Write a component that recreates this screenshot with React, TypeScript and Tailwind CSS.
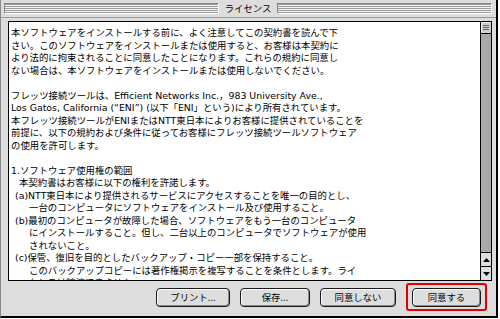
import React from "react";

const lines: { t: string; pl: number }[] = [
  { t: "本ソフトウェアをインストールする前に、よく注意してこの契約書を読んで下", pl: 0 },
  { t: "さい。このソフトウェアをインストールまたは使用すると、お客様は本契約に", pl: 0 },
  { t: "より法的に拘束されることに同意したことになります。これらの規約に同意し", pl: 0 },
  { t: "ない場合は、本ソフトウェアをインストールまたは使用しないでください。", pl: 0 },
  { t: "", pl: 0 },
  { t: "フレッツ接続ツールは、Efficient Networks Inc.，983 University Ave.,", pl: 0 },
  { t: "Los Gatos, California (\u201CENI\u201D) (以下「ENI」という)により所有されています。", pl: 0 },
  { t: "本フレッツ接続ツールがENIまたはNTT東日本によりお客様に提供されていることを", pl: 0 },
  { t: "前提に、以下の規約および条件に従ってお客様にフレッツ接続ツールソフトウェア", pl: 0 },
  { t: "の使用を許可します。", pl: 0 },
  { t: "", pl: 0 },
  { t: "1.ソフトウェア使用権の範囲", pl: 0 },
  { t: "本契約書はお客様に以下の権利を許諾します。", pl: 8 },
  { t: "(a)NTT東日本により提供されるサービスにアクセスすることを唯一の目的とし、", pl: 4 },
  { t: "一台のコンピュータにソフトウェアをインストール及び使用すること。", pl: 18 },
  { t: "(b)最初のコンピュータが故障した場合、ソフトウェアをもう一台のコンピュータ", pl: 4 },
  { t: "にインストールすること。但し、二台以上のコンピュータでソフトウェアが使用", pl: 18 },
  { t: "されないこと。", pl: 18 },
  { t: "(c)保管、復旧を目的としたバックアップ・コピー一部を保持すること。", pl: 4 },
  { t: "このバックアップコピーには著作権掲示を複写することを条件とします。ライ", pl: 18 },
  { t: "センスは譲渡できません。", pl: 18 },
];

const font = {
  fontFamily: '"Noto Sans CJK JP", "Liberation Sans", sans-serif',
};

const bodyFont = {
  fontFamily: '"DejaVu Sans", "Noto Sans CJK JP", sans-serif',
};

function Stripes() {
  return (
    <div className="flex-1 h-[11px] border-t border-l border-t-[#888] border-l-[#888] border-b border-r border-b-white border-r-white bg-[repeating-linear-gradient(to_bottom,#9a9a9a_0px,#9a9a9a_1px,#f4f4f4_1px,#f4f4f4_2px)]" />
  );
}

function Btn({ label, w }: { label: string; w: number }) {
  return (
    <div
      className="h-[19px] rounded-[4px] border border-[#1a1a1a] bg-[#dedede] flex items-center justify-center text-[9.4px] text-black shadow-[inset_1px_1px_0_#ffffff,inset_-1px_-1px_0_#8a8a8a]"
      style={{ width: w }}
    >
      {label}
    </div>
  );
}

export default function App() {
  return (
    <div className="w-[500px] h-[319px] bg-white" style={font}>
      <div className="w-[498px] h-[318px] flex flex-col bg-[#dddddd] border-l border-l-[#8a8a8a] border-r-2 border-r-black border-b-2 border-b-black">
        <div className="h-[18px] flex items-center gap-[6px] pl-[3px] pr-[4px] border-b border-b-[#999]">
          <Stripes />
          <div className="text-[9.4px] leading-none text-black">ライセンス</div>
          <Stripes />
        </div>
        <div className="flex-1 flex flex-col pl-[7px] pr-[4px] pt-[3px]">
          <div className="h-[260px] border border-black flex bg-white">
            <div
              className="flex-1 overflow-hidden pl-[2px] pt-[5px] text-[9.4px] leading-[12.5px] text-black whitespace-pre"
              style={bodyFont}
            >
              {lines.map((l, i) => (
                <div key={i} className="h-[12.5px]" style={{ paddingLeft: l.pl }}>
                  {l.t}
                </div>
              ))}
            </div>
            <div className="w-[11px] border-l border-black flex flex-col bg-[#a9a9a9]">
              <div className="h-[12px] bg-[#cfcfcf] border-b border-black flex flex-col items-center justify-center gap-[1px] shadow-[inset_1px_1px_0_#eee]">
                <div className="w-[6px] h-[1px] bg-[#666]" />
                <div className="w-[6px] h-[1px] bg-[#666]" />
                <div className="w-[6px] h-[1px] bg-[#666]" />
              </div>
              <div className="flex-1" />
              <div className="h-[14px] border-t border-black bg-[#dedede] flex items-center justify-center">
                <svg width="7" height="4" viewBox="0 0 7 4">
                  <polygon points="3.5,0 7,4 0,4" fill="#000" />
                </svg>
              </div>
              <div className="h-[14px] border-t border-black bg-[#dedede] flex items-center justify-center">
                <svg width="7" height="4" viewBox="0 0 7 4">
                  <polygon points="0,0 7,0 3.5,4" fill="#000" />
                </svg>
              </div>
            </div>
          </div>
          <div className="mt-[2px] flex justify-end items-center gap-[10px] pr-[5px]">
            <Btn label="プリント..." w={74} />
            <Btn label="保存..." w={70} />
            <Btn label="同意しない" w={76} />
            <div className="border-2 border-[#e00000] rounded-[3px] px-[4px] py-[2.5px]">
              <Btn label="同意する" w={69} />
            </div>
          </div>
        </div>
      </div>
    </div>
  );
}
